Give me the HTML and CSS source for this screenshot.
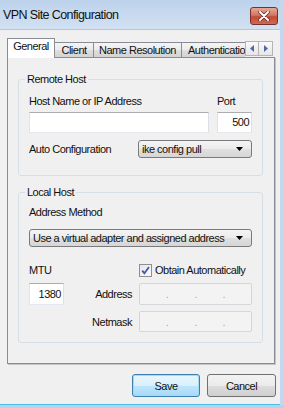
FILE: index.html
```html
<!DOCTYPE html>
<html lang="en">
<head>
    <meta charset="UTF-8">
    <meta name="viewport" content="width=device-width, initial-scale=1.0">
    <title>VPN Site Configuration</title>
    <link rel="stylesheet" href="styles.css">
</head>
<body>
    <div class="window">
        <div class="titlebar">
            <span class="title">VPN Site Configuration</span>
            <div class="close-btn">
                <svg width="12" height="10" viewBox="0 0 12 10">
                    <path d="M2 1 L10 9 M10 1 L2 9" stroke="#5a2a26" stroke-width="3.4" stroke-linecap="round"/>
                    <path d="M2 1 L10 9 M10 1 L2 9" stroke="#fff" stroke-width="2" stroke-linecap="round"/>
                </svg>
            </div>
        </div>

        <div class="client">
            <div class="tabbar">
                <div class="tabs">
                    <div class="tab active tab-general">General</div>
                    <div class="tab tab-client">Client</div>
                    <div class="tab tab-names">Name Resolution</div>
                    <div class="tab tab-auth">Authentication</div>
                </div>
                <div class="tab-scroll">
                    <div class="scroll-btn">
                        <svg width="4" height="7" viewBox="0 0 4 7"><path d="M4 0 L0 3.5 L4 7 Z" fill="#4d6ba3"/></svg>
                    </div>
                    <div class="scroll-btn">
                        <svg width="4" height="7" viewBox="0 0 4 7"><path d="M0 0 L4 3.5 L0 7 Z" fill="#4d6ba3"/></svg>
                    </div>
                </div>
            </div>

            <div class="panel">
                <fieldset class="group remote">
                    <legend>Remote Host</legend>
                    <div class="host-grid">
                        <span class="row-label">Host Name or IP Address</span>
                        <span class="row-label">Port</span>
                        <div class="textbox"></div>
                        <div class="textbox">500</div>
                    </div>
                    <div class="auto-row">
                        <span>Auto Configuration</span>
                        <div class="combo combo-auto">
                            <span>ike config pull</span>
                            <svg width="7" height="4" viewBox="0 0 7 4"><path d="M0 0 L7 0 L3.5 4 Z" fill="#000"/></svg>
                        </div>
                    </div>
                </fieldset>

                <fieldset class="group local">
                    <legend>Local Host</legend>
                    <div class="row-label">Address Method</div>
                    <div class="combo combo-method">
                        <span>Use a virtual adapter and assigned address</span>
                        <svg width="7" height="4" viewBox="0 0 7 4"><path d="M0 0 L7 0 L3.5 4 Z" fill="#000"/></svg>
                    </div>
                    <div class="mtu-grid">
                        <span class="mtu-label">MTU</span>
                        <label class="check">
                            <span class="checkbox">
                                <svg width="11" height="11" viewBox="0 0 11 11"><path d="M2.2 5.6 L4.4 8.2 L9 2" fill="none" stroke="#3b5ea8" stroke-width="1.8"/></svg>
                            </span>
                            Obtain Automatically
                        </label>
                        <div class="textbox mtu-box">1380</div>
                        <span class="side-label">Address</span>
                        <div class="ipbox"><span>.</span><span>.</span><span>.</span></div>
                        <span class="side-label netmask">Netmask</span>
                        <div class="ipbox netmask-box"><span>.</span><span>.</span><span>.</span></div>
                    </div>
                </fieldset>
            </div>

            <div class="buttons">
                <button class="btn btn-default">Save</button>
                <button class="btn btn-cancel">Cancel</button>
            </div>
        </div>
    </div>
</body>
</html>
```

FILE: styles.css
```css
* {
    box-sizing: border-box;
}
body {
    margin: 0;
    font-family: "Liberation Sans", Arial, sans-serif;
    font-size: 11px;
    letter-spacing: -0.5px;
    color: #111;
    background: #fff;
}
.window {
    width: 284px;
    height: 408px;
    display: flex;
    flex-direction: column;
    padding-right: 4px;
    background: #c4d7ed;
    border-bottom: 3px solid #a9d8ef;
    overflow: hidden;
}
.titlebar {
    height: 29px;
    flex: none;
    display: flex;
    align-items: center;
    justify-content: space-between;
    padding: 0 2px 0 3px;
    background: linear-gradient(#bcd2eb, #d2e1f2);
}
.title {
    font-size: 12.5px;
    letter-spacing: -0.6px;
    line-height: 16px;
}
.close-btn {
    width: 28px;
    height: 18px;
    margin-top: 3px;
    display: flex;
    align-items: center;
    justify-content: center;
    border: 1px solid #7a302a;
    border-radius: 3px;
    background: linear-gradient(#e7a796, #d27764 45%, #c34a35 55%, #cf6a52);
}
.client {
    flex: 1;
    background: #f0f0f0;
    border-top: 1px solid #b4c6dc;
    border-bottom: 1px solid #4dbbe6;
    padding: 8px 0 0 0;
}

/* tabs */
.tabbar {
    display: flex;
    align-items: flex-end;
    height: 20px;
    margin: 0 0 -1px 7px;
    position: relative;
    z-index: 1;
}
.tabs {
    display: flex;
    align-items: flex-end;
    width: 238px;
    overflow: hidden;
}
.tab {
    flex: none;
    height: 15px;
    margin-bottom: 1px;
    padding-top: 1px;
    line-height: 12px;
    text-align: center;
    white-space: nowrap;
    border-top: 1px solid #898c95;
    border-right: 1px solid #898c95;
    background: linear-gradient(#f4f4f4, #ebebeb 50%, #dfdfdf 50%, #d3d3d3);
}
.tab.active {
    height: 20px;
    margin-bottom: 0;
    border-left: 1px solid #898c95;
    background: #fff;
}
.tab-general {
    width: 48px;
}
.tab-client {
    width: 39px;
}
.tab-names {
    width: 88px;
}
.tab-auth {
    width: 72px;
    text-align: left;
    padding-left: 6px;
}
.tab-scroll {
    display: flex;
    margin-bottom: 2px;
}
.scroll-btn {
    width: 14px;
    height: 15px;
    display: flex;
    align-items: center;
    justify-content: center;
    border: 1px solid #b4b4b4;
    background: linear-gradient(#fafafa, #e6e6e6);
}
.scroll-btn + .scroll-btn {
    border-left: none;
}

/* tab page */
.panel {
    width: 268px;
    margin-left: 7px;
    padding: 14px 11px 20px 10px;
    border: 1px solid #898c95;
    background: #f0f0f0;
    box-shadow: 1px 1px 0 #c4c4c4;
}
.group {
    margin: 0;
    min-width: 0;
    padding: 8px 10px 17px;
    border: 1px solid #d5dfe5;
    border-radius: 3px;
}
.group legend {
    margin-left: -4px;
    padding: 0 2px;
    line-height: 14px;
}
.local {
    margin-top: 9px;
    padding: 6px 10px 10px;
}
.row-label {
    line-height: 14px;
}
.host-grid {
    display: grid;
    grid-template-columns: 1fr 35px;
    grid-template-rows: 14px 21px;
    column-gap: 8px;
    row-gap: 4px;
}
.textbox {
    height: 21px;
    padding-right: 2px;
    line-height: 19px;
    text-align: right;
    background: #fff;
    border: 1px solid;
    border-color: #abadb3 #dbdfe6 #e3e9ef #e2e3ea;
}
.auto-row {
    display: flex;
    align-items: center;
    justify-content: space-between;
    margin-top: 7px;
}
.combo {
    height: 18px;
    display: flex;
    align-items: center;
    justify-content: space-between;
    padding: 0 8px 0 3px;
    border: 1px solid #7a7a7a;
    border-radius: 3px;
    background: linear-gradient(#f4f4f4, #ebebeb 50%, #e0e0e0 50%, #d6d6d6);
    white-space: nowrap;
}
.combo-auto {
    width: 114px;
}
.combo-method {
    margin-top: 10px;
}
.mtu-grid {
    display: grid;
    grid-template-columns: 36px 1fr 113px;
    grid-template-rows: 14px 22px 21px;
    column-gap: 7px;
    row-gap: 6px;
    margin-top: 16px;
    align-items: center;
}
.mtu-label {
    grid-column: 1 / 3;
}
.check {
    display: flex;
    align-items: center;
    gap: 3px;
    white-space: nowrap;
}
.checkbox {
    width: 13px;
    height: 13px;
    display: flex;
    align-items: center;
    justify-content: center;
    border: 1px solid #8f8f8f;
    background: linear-gradient(135deg, #e6e6e6, #fbfbfb);
}
.mtu-box {
    width: 35px;
    height: 22px;
    line-height: 20px;
}
.side-label {
    text-align: right;
}
.netmask {
    grid-column: 2;
}
.ipbox {
    height: 22px;
    display: flex;
    justify-content: space-evenly;
    align-items: center;
    color: #a8a8a8;
    border: 1px solid #d3d6da;
    border-radius: 2px;
    background: #f3f3f3;
}
.netmask-box {
    height: 21px;
}

/* dialog buttons */
.buttons {
    display: flex;
    justify-content: flex-end;
    gap: 7px;
    margin-top: 10px;
    padding-right: 4px;
}
.btn {
    width: 68px;
    height: 23px;
    padding: 0;
    font: inherit;
    letter-spacing: inherit;
    color: #111;
    border: 1px solid #707070;
    border-radius: 3px;
    background: linear-gradient(#f2f2f2, #ebebeb 50%, #dddddd 50%, #cfcfcf);
}
.btn-default {
    border-color: #3c7fb1;
    background: linear-gradient(#eaf6fd, #d9f0fc 50%, #bee6fd 50%, #a7d9f5);
    box-shadow: inset 0 0 0 1px #9fdcf5;
}
.btn-cancel {
    width: 69px;
}
```
